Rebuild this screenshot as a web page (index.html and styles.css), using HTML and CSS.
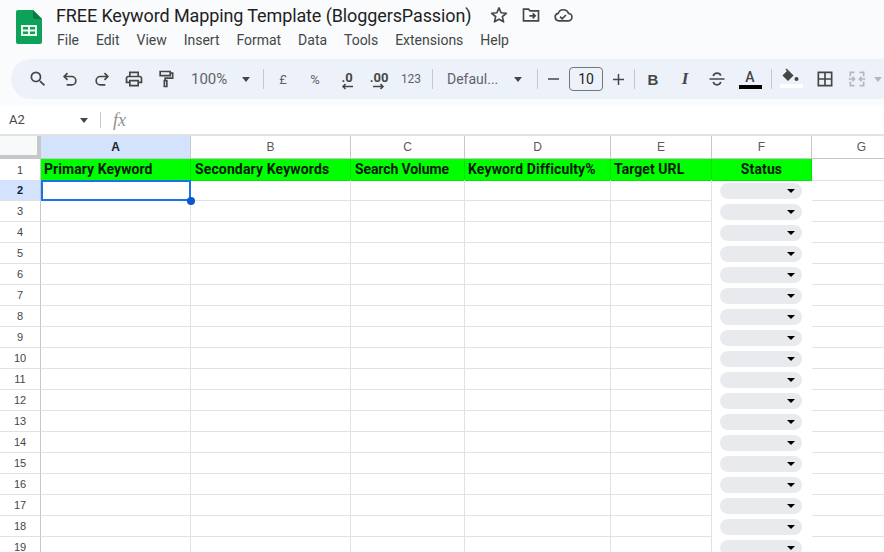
FILE: index.html
```html
<!DOCTYPE html>
<html lang="en">
<head>
<meta charset="utf-8">
<title>FREE Keyword Mapping Template</title>
<link rel="stylesheet" href="styles.css">
</head>
<body>
<div class="app">
  <header class="top">
    <svg class="logo" width="26" height="34" viewBox="0 0 26 34"><path d="M2 0h15l9 9v23a2 2 0 0 1-2 2H2a2 2 0 0 1-2-2V2a2 2 0 0 1 2-2z" fill="#0da15a"/><path d="M17 0l9 9h-7a2 2 0 0 1-2-2z" fill="#0a7a44"/><path d="M5 15h16v11H5zM7 17v2.500h5V17zm7 0v2.500h5V17zM7 21.500V24h5v-2.500zm7 0V24h5v-2.500z" fill="#e9f7ef" fill-rule="evenodd"/></svg>
    <div class="titles">
      <div class="title-row">
        <span class="title">FREE Keyword Mapping Template (BloggersPassion)</span>
        <span class="title-icons">
          <svg width="20" height="20" viewBox="0 0 24 24"><path d="M12 3.500l2.500 5.800 6.300.6-4.800 4.100 1.500 6.200L12 17l-5.500 3.200L8 14 3.200 9.900l6.300-.6z" fill="none" stroke="#444746" stroke-width="2" stroke-linejoin="round"/></svg>
          <svg width="20" height="20" viewBox="0 0 24 24"><path d="M3 19V5h6l2 2h10v12zM10 13h7M14 10l3 3-3 3" fill="none" stroke="#444746" stroke-width="2"/></svg>
          <svg width="20" height="20" viewBox="0 0 24 24"><path d="M7 19a4.500 4.500 0 0 1-.8-8.900A6.500 6.500 0 0 1 18.500 10a4.500 4.500 0 0 1-.5 9zM8.500 14l2.500 2.500 4.500-4.500" fill="none" stroke="#444746" stroke-width="2"/></svg>
        </span>
      </div>
      <nav class="menu">
        <span>File</span><span>Edit</span><span>View</span><span>Insert</span><span>Format</span><span>Data</span><span>Tools</span><span>Extensions</span><span>Help</span>
      </nav>
    </div>
  </header>

  <div class="toolwrap">
  <div class="toolbar">
    <span class="btn"><svg width="20" height="20" viewBox="0 0 24 24"><path fill="#444746" d="M15.500 14h-.79l-.28-.27A6.471 6.471 0 0 0 16 9.500 6.500 6.500 0 1 0 9.500 16c1.610 0 3.090-.59 4.230-1.570l.27.28v.79l5 4.990L20.490 19l-4.990-5zm-6 0C7.010 14 5 11.990 5 9.500S7.010 5 9.500 5 14 7.010 14 9.500 11.990 14 9.500 14z"/></svg></span>
    <span class="btn"><svg width="20" height="20" viewBox="0 0 24 24"><path d="M9 5L5 9l4 4M5 9h9a4.500 4.500 0 0 1 0 10H8" fill="none" stroke="#444746" stroke-width="2"/></svg></span>
    <span class="btn"><svg width="20" height="20" viewBox="0 0 24 24"><path d="M15 5l4 4-4 4M19 9h-9a4.500 4.500 0 0 0 0 10h6" fill="none" stroke="#444746" stroke-width="2"/></svg></span>
    <span class="btn"><svg width="20" height="20" viewBox="0 0 24 24"><path fill="#444746" d="M19 8h-1V3H6v5H5c-1.660 0-3 1.340-3 3v6h4v4h12v-4h4v-6c0-1.660-1.340-3-3-3zM8 5h8v3H8V5zm8 12v2H8v-4h8v2zm2-2v-2H6v2H4v-4c0-.55.45-1 1-1h14c.55 0 1 .45 1 1v4h-2z"/></svg></span>
    <span class="btn"><svg width="20" height="20" viewBox="0 0 24 24"><path d="M5 3h12v5H5zM17 5h3v6h-9v3M10 14h3v7h-3z" fill="none" stroke="#444746" stroke-width="2"/></svg></span>
    <span class="zoom">100%</span><i class="caret zoom-caret"></i>
    <span class="sep s1"></span>
    <span class="btn txt">£</span>
    <span class="btn txt">%</span>
    <span class="btn dec"><b>.0</b><svg width="12" height="7" viewBox="0 0 12 7"><path d="M12 3.500H2M4.500 1L2 3.500 4.500 6" fill="none" stroke="#444746" stroke-width="1.500"/></svg></span>
    <span class="btn dec"><b>.00</b><svg width="12" height="7" viewBox="0 0 12 7"><path d="M0 3.500h10M7.500 1L10 3.500 7.500 6" fill="none" stroke="#444746" stroke-width="1.500"/></svg></span>
    <span class="btn txt small">123</span>
    <span class="sep s2"></span>
    <span class="font">Defaul...</span><i class="caret font-caret"></i>
    <span class="sep s3"></span>
    <span class="btn minus"><svg width="11" height="2" viewBox="0 0 11 2"><path d="M0 1h11" stroke="#444746" stroke-width="1.500"/></svg></span>
    <span class="size">10</span>
    <span class="btn plus"><svg width="11" height="11" viewBox="0 0 11 11"><path d="M0 5.500h11M5.500 0v11" stroke="#444746" stroke-width="1.500"/></svg></span>
    <span class="sep s4"></span>
    <span class="btn fmt bold">B</span>
    <span class="btn fmt ital">I</span>
    <span class="btn"><svg width="20" height="20" viewBox="0 0 24 24"><path d="M3 12h18M7.500 8.500C8 6 10 5 12 5s4 1 4.500 3M16.500 15.500C16 18 14 19 12 19s-4-1-4.500-3.500" fill="none" stroke="#444746" stroke-width="2"/></svg></span>
    <span class="btn color ink"><span class="a">A</span><span class="bar black"></span></span>
    <span class="sep s5"></span>
    <span class="btn color fill"><svg width="18" height="15" viewBox="0 0 18 15"><path d="M4 1l6.500 6.500L6 12 1.500 7.500 5.500 3.500" fill="#444746" stroke="#444746" stroke-width="1.500"/><circle cx="14.500" cy="11" r="2" fill="#444746"/></svg><span class="bar white"></span></span>
    <span class="btn gapb"><svg width="20" height="20" viewBox="0 0 24 24"><path d="M4 4h16v16H4zM12 4v16M4 12h16" fill="none" stroke="#444746" stroke-width="2"/></svg></span>
    <span class="btn"><svg width="20" height="20" viewBox="0 0 24 24"><path d="M9 4H4v5M15 4h5v5M9 20H4v-5M15 20h5v-5M2 12h7M6.500 9.500L9 12l-2.500 2.500M22 12h-7M17.500 9.500L15 12l2.500 2.500" fill="none" stroke="#b4b7b9" stroke-width="2"/></svg></span>
    <i class="caret off"></i>
  </div>
  </div>

  <div class="fbar">
    <span class="name">A2</span><i class="caret name-caret"></i>
    <span class="sep s6"></span>
    <span class="fx">fx</span>
  </div>

  <div class="sheet">
    <div class="row head">
      <div class="corner"></div><div class="ch on">A</div><div class="ch">B</div><div class="ch">C</div><div class="ch">D</div><div class="ch">E</div><div class="ch">F</div><div class="ch">G</div>
    </div>
    <div class="row r1">
      <div class="rh">1</div><div class="c g tight">Primary Keyword</div><div class="c g gb">Secondary Keywords</div><div class="c g gb narrow">Search Volume</div><div class="c g">Keyword Difficulty%</div><div class="c g tight">Target URL</div><div class="c g mid">Status</div><div class="c"></div>
    </div>
    <div class="row"><div class="rh on">2</div><div class="c sel"><span class="handle"></span></div><div class="c"></div><div class="c"></div><div class="c"></div><div class="c"></div><div class="c st"><span class="chip"><i class="caret dark"></i></span></div><div class="c"></div></div>
    <div class="row"><div class="rh">3</div><div class="c"></div><div class="c"></div><div class="c"></div><div class="c"></div><div class="c"></div><div class="c st"><span class="chip"><i class="caret dark"></i></span></div><div class="c"></div></div>
    <div class="row"><div class="rh">4</div><div class="c"></div><div class="c"></div><div class="c"></div><div class="c"></div><div class="c"></div><div class="c st"><span class="chip"><i class="caret dark"></i></span></div><div class="c"></div></div>
    <div class="row"><div class="rh">5</div><div class="c"></div><div class="c"></div><div class="c"></div><div class="c"></div><div class="c"></div><div class="c st"><span class="chip"><i class="caret dark"></i></span></div><div class="c"></div></div>
    <div class="row"><div class="rh">6</div><div class="c"></div><div class="c"></div><div class="c"></div><div class="c"></div><div class="c"></div><div class="c st"><span class="chip"><i class="caret dark"></i></span></div><div class="c"></div></div>
    <div class="row"><div class="rh">7</div><div class="c"></div><div class="c"></div><div class="c"></div><div class="c"></div><div class="c"></div><div class="c st"><span class="chip"><i class="caret dark"></i></span></div><div class="c"></div></div>
    <div class="row"><div class="rh">8</div><div class="c"></div><div class="c"></div><div class="c"></div><div class="c"></div><div class="c"></div><div class="c st"><span class="chip"><i class="caret dark"></i></span></div><div class="c"></div></div>
    <div class="row"><div class="rh">9</div><div class="c"></div><div class="c"></div><div class="c"></div><div class="c"></div><div class="c"></div><div class="c st"><span class="chip"><i class="caret dark"></i></span></div><div class="c"></div></div>
    <div class="row"><div class="rh">10</div><div class="c"></div><div class="c"></div><div class="c"></div><div class="c"></div><div class="c"></div><div class="c st"><span class="chip"><i class="caret dark"></i></span></div><div class="c"></div></div>
    <div class="row"><div class="rh">11</div><div class="c"></div><div class="c"></div><div class="c"></div><div class="c"></div><div class="c"></div><div class="c st"><span class="chip"><i class="caret dark"></i></span></div><div class="c"></div></div>
    <div class="row"><div class="rh">12</div><div class="c"></div><div class="c"></div><div class="c"></div><div class="c"></div><div class="c"></div><div class="c st"><span class="chip"><i class="caret dark"></i></span></div><div class="c"></div></div>
    <div class="row"><div class="rh">13</div><div class="c"></div><div class="c"></div><div class="c"></div><div class="c"></div><div class="c"></div><div class="c st"><span class="chip"><i class="caret dark"></i></span></div><div class="c"></div></div>
    <div class="row"><div class="rh">14</div><div class="c"></div><div class="c"></div><div class="c"></div><div class="c"></div><div class="c"></div><div class="c st"><span class="chip"><i class="caret dark"></i></span></div><div class="c"></div></div>
    <div class="row"><div class="rh">15</div><div class="c"></div><div class="c"></div><div class="c"></div><div class="c"></div><div class="c"></div><div class="c st"><span class="chip"><i class="caret dark"></i></span></div><div class="c"></div></div>
    <div class="row"><div class="rh">16</div><div class="c"></div><div class="c"></div><div class="c"></div><div class="c"></div><div class="c"></div><div class="c st"><span class="chip"><i class="caret dark"></i></span></div><div class="c"></div></div>
    <div class="row"><div class="rh">17</div><div class="c"></div><div class="c"></div><div class="c"></div><div class="c"></div><div class="c"></div><div class="c st"><span class="chip"><i class="caret dark"></i></span></div><div class="c"></div></div>
    <div class="row"><div class="rh">18</div><div class="c"></div><div class="c"></div><div class="c"></div><div class="c"></div><div class="c"></div><div class="c st"><span class="chip"><i class="caret dark"></i></span></div><div class="c"></div></div>
    <div class="row"><div class="rh">19</div><div class="c"></div><div class="c"></div><div class="c"></div><div class="c"></div><div class="c"></div><div class="c st"><span class="chip"><i class="caret dark"></i></span></div><div class="c"></div></div>
  </div>
</div>
</body>
</html>
```
FILE: styles.css
```css
* { box-sizing: border-box; }
html, body { margin: 0; height: 100%; overflow: hidden; background: #fff; }
body { font-family: Roboto, "Liberation Sans", sans-serif; color: #444746; }
.app { width: 884px; height: 552px; overflow: hidden; display: flex; flex-direction: column; }

.top { height: 59px; background: #f9fbfd; display: flex; padding: 10px 0 0 16px; flex: none; }
.logo { flex: none; }
.titles { margin-left: 14px; margin-top: -10px; }
.title-row { display: flex; align-items: center; height: 30px; }
.title { font-size: 18px; letter-spacing: -0.11px; color: #1f1f1f; white-space: nowrap; }
.title-icons { display: flex; gap: 12px; margin-left: 18px; }
.menu { display: flex; font-size: 14px; color: #444746; margin: 0 0 0 1px; line-height: 20px; }
.menu span { margin-right: 16.900px; white-space: nowrap; }

.toolwrap { flex: none; height: 47px; background: #f9fbfd; padding-left: 11px; }
.toolbar { height: 40px; background: #edf2fa; border-radius: 20px 0 0 20px; display: flex; align-items: flex-start; padding-left: 11px; overflow: hidden; }
.btn { width: 32px; height: 40px; display: flex; flex: none; align-items: center; justify-content: center; color: #444746; }
.txt { font-size: 13px; color: #5f6368; }
.small { font-size: 12px; }
.dec { flex-direction: column; padding-top: 4px; }
.dec b { font-size: 13px; line-height: 11px; font-weight: 700; }
.zoom { width: 42px; margin-left: 9px; height: 40px; line-height: 41px; font-size: 15px; color: #5f6368; flex: none; }
.caret { display: block; width: 0; height: 0; border: 4.500px solid transparent; border-top: 5px solid #444746; border-bottom: 0; flex: none; }
.zoom-caret { margin: 18px 0 0 9px; }
.sep { width: 1px; height: 20px; background: #c7c7c7; margin-top: 10px; flex: none; }
.s1 { margin-left: 13px; margin-right: 3px; }
.s2 { margin-left: 5px; }
.font { width: 60px; margin-left: 14px; line-height: 41px; height: 40px; font-size: 14px; color: #5f6368; flex: none; white-space: nowrap; }
.font-caret { margin: 18px 0 0 7px; }
.s3 { margin-left: 15px; }
.minus { width: 31px; }
.size { width: 34px; height: 24px; margin-top: 8px; border: 1px solid #747775; border-radius: 4px; text-align: center; line-height: 22px; font-size: 14px; color: #1f1f1f; flex: none; }
.plus { width: 30px; }
.s4 { margin-right: 2px; margin-left: 1px; }
.fmt { font-size: 15px; font-family: "Liberation Sans", sans-serif; }
.bold { font-weight: 700; }
.ital { font-style: italic; font-weight: 700; font-family: "Liberation Serif", serif; font-size: 17px; }
.color { flex-direction: column; }
.ink { margin-left: 1px; }
.a { font-size: 14px; line-height: 14px; font-weight: 500; }
.bar { width: 23px; height: 4px; margin-top: 1px; }
.black { background: #000; }
.white { background: #fff; }
.s5 { margin-left: 5px; margin-right: 3px; }
.fill svg { margin-top: -2px; }
.gapb { margin-left: 2px; }
.off { border-top-color: #b4b7b9; margin: 18px 0 0 1px; }

.fbar { flex: none; height: 28px; background: #fff; display: flex; align-items: flex-start; padding-left: 9px; }
.name { width: 71px; font-size: 13px; line-height: 27px; }
.name-caret { margin-top: 12px; }
.s6 { height: 16px; margin: 6px 0 0 12px; }
.fx { font-family: "Liberation Serif", serif; font-style: italic; font-size: 18px; color: #8e9194; margin-left: 12px; line-height: 29px; }

.sheet { flex: 1; border-top: 2px solid #e1e3e1; }
.row { display: grid; grid-template-columns: 41px 150px 160px 114px 146px 101px 100px 100px; height: 21px; }
.head { height: 23px; }
.rh, .ch { display: flex; align-items: center; justify-content: center; font-size: 11px; color: #444746; background: #fff; font-family: "Liberation Sans", sans-serif; }
.rh { border-right: 1px solid #c7c7c7; border-bottom: 1px solid #e1e3e1; }
.rh.on { background: #d3e3fd; color: #0b1f3a; font-weight: 700; }
.ch { border-right: 1px solid #c7c7c7; border-bottom: 1px solid #c7c7c7; font-size: 12px; color: #575a5c; }
.ch.on { background: #d3e3fd; color: #1f1f1f; font-weight: 700; }
.corner { background: #f8f9fa; border-right: 4px solid #c7c7c7; border-bottom: 4px solid #c7c7c7; }
.c { border-right: 1px solid #e1e3e1; border-bottom: 1px solid #e1e3e1; position: relative; }
.g { background: #00ff00; font-weight: 700; font-size: 14px; line-height: 21px; letter-spacing: 0.13px; color: #0a1a0a; padding-left: 3px; white-space: nowrap; border-color: #00e600; }
.gb { padding-left: 4px; }
.tight { letter-spacing: 0.06px; }
.narrow { letter-spacing: -0.1px; }
.mid { text-align: center; padding-left: 0; }
.st { border-bottom: 0; border-right: 0; display: flex; align-items: center; justify-content: center; }
.chip { display: flex; align-items: center; justify-content: flex-end; width: 82px; height: 16px; border-radius: 8px; background: #e8eaed; padding-right: 7px; margin: 0 0 0 -3px; }
.dark { border-top-color: #000; border-width: 4.500px; border-top-width: 4.500px; }
.sel { border: 2px solid #1a73e8; z-index: 1; }
.handle { position: absolute; right: -6px; bottom: -6px; width: 8px; height: 8px; border-radius: 50%; background: #0b57d0; }
```
